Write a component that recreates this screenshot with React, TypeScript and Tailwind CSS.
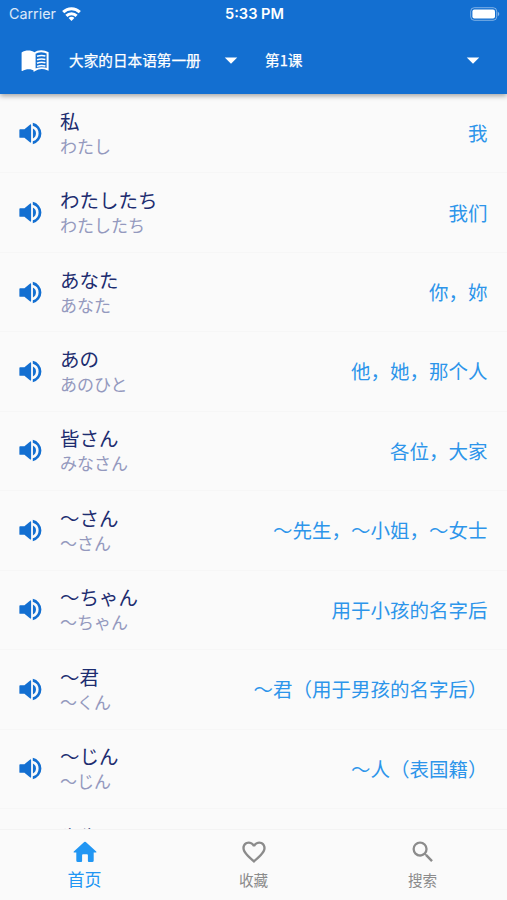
import { MdArrowDropDown, MdFavoriteBorder, MdSearch } from "react-icons/md";

interface Word {
  id: number;
  word: string;
  kana: string;
  meaning: string;
}

interface IconProps {
  className?: string;
}

const words: Word[] = [
  { id: 1, word: "私", kana: "わたし", meaning: "我" },
  { id: 2, word: "わたしたち", kana: "わたしたち", meaning: "我们" },
  { id: 3, word: "あなた", kana: "あなた", meaning: "你，妳" },
  { id: 4, word: "あの", kana: "あのひと", meaning: "他，她，那个人" },
  { id: 5, word: "皆さん", kana: "みなさん", meaning: "各位，大家" },
  { id: 6, word: "～さん", kana: "～さん", meaning: "～先生，～小姐，～女士" },
  { id: 7, word: "～ちゃん", kana: "～ちゃん", meaning: "用于小孩的名字后" },
  { id: 8, word: "～君", kana: "～くん", meaning: "～君（用于男孩的名字后）" },
  { id: 9, word: "～じん", kana: "～じん", meaning: "～人（表国籍）" },
  { id: 10, word: "先生", kana: "せんせい", meaning: "老师" },
];

const tabs = [
  { label: "首页", icon: HomeIcon, active: true },
  { label: "收藏", icon: MdFavoriteBorder, active: false },
  { label: "搜索", icon: MdSearch, active: false },
];

function HomeIcon({ className }: IconProps) {
  return (
    <svg className={className} viewBox="0 0 28 28" fill="currentColor">
      <path d="M13.2 4.1q.8-.7 1.6 0l10.4 9.3q.9 1-.4 1H22.7v8.1q0 1.5-1.5 1.5h-3.3q-1 0-1-1v-5.8q0-.9-.9-.9h-4q-.9 0-.9.9V23q0 1-1 1H6.8q-1.5 0-1.5-1.5v-8.1H3.2q-1.3 0-.4-1z" />
    </svg>
  );
}

function BookIcon() {
  return (
    <svg className="mt-[2px]" width="30" height="30" viewBox="0 0 30 30" fill="none" stroke="white">
      <path
        d="M1.6 6.4C5.6 4 11 4 14.6 6.4V25C11.2 22.6 6 22.8 2.4 25q-.8.4-.8-.5z"
        fill="white"
        stroke="none"
      />
      <path d="M14.6 7.2C18.2 4.6 24 4.6 27.6 6.9v16.4C24 21.8 18.4 21.8 14.6 24.2z" strokeWidth="2" />
      <path
        d="M17 10.3c2.6-1 5.7-1.1 8.4-.4M17 13.8c2.6-1 5.7-1.1 8.4-.4M17 17.2c2.6-1 5.7-1.1 8.4-.4M17 20.4c2.6-1 5.7-1.1 8.4-.4"
        strokeWidth="1.5"
      />
    </svg>
  );
}

function VolumeIcon() {
  return (
    <svg className="size-[29px] text-[#136fd1]" viewBox="0 0 24 24" fill="currentColor">
      <path d="M3.4 8.4Q2.8 8.4 2.8 9v6q0 .6.6.6H7l4.5 3.7q1 .7 1-.4V5.1q0-1.1-1-.4L7 8.4z" />
      <path d="M14 7.9a4.6 4.6 0 0 1 0 8.2z" />
      <path d="M13.9 3.2v2.3a6.8 6.8 0 0 1 0 13v2.3a9 9 0 0 0 0-17.6z" />
    </svg>
  );
}

function StatusBar() {
  return (
    <div className="grid h-[27px] grid-cols-3 items-center pl-[9px] pr-[7px] font-['Inter','Liberation_Sans',sans-serif] text-white">
      <div className="flex items-center gap-[6px] text-[14.3px] text-white/85">
        <span>Carrier</span>
        <svg width="19" height="14" viewBox="0 0 19 14" fill="none" stroke="white" strokeWidth="3">
          <path d="M1.2 5.1a11.8 11.8 0 0 1 16.6 0" />
          <path d="M4.4 8.9a7.2 7.2 0 0 1 10.2 0" />
          <path d="M9.5 13.9 6.6 11a4 4 0 0 1 5.8 0z" fill="white" stroke="none" />
        </svg>
      </div>
      <span className="pt-[2px] text-center text-[14.6px] font-semibold">5:33 PM</span>
      <svg className="justify-self-end" width="30" height="14" viewBox="0 0 30 14">
        <rect x="0.7" y="0.7" width="26" height="12.6" rx="3.6" fill="none" stroke="white" strokeOpacity="0.45" />
        <rect x="2.4" y="2.4" width="22.6" height="9.2" rx="2" fill="white" />
        <path d="M27.8 4.8c2 .8 2 3.6 0 4.4z" fill="white" fillOpacity="0.5" />
      </svg>
    </div>
  );
}

function Header() {
  return (
    <header className="relative z-10 h-[94px] shrink-0 bg-[#136fd1] shadow-[0_2px_5px_rgba(0,0,0,0.35)]">
      <StatusBar />
      <div className="flex h-[65px] items-center pl-5 text-[14.65px] text-white [-webkit-text-stroke:0.25px_white]">
        <BookIcon />
        <div className="ml-[19px] flex w-[177px] items-center justify-between">
          <span>大家的日本语第一册</span>
          <MdArrowDropDown className="size-[30px]" />
        </div>
        <div className="ml-[19px] flex w-[223px] items-center justify-between">
          <span>第1课</span>
          <MdArrowDropDown className="size-[30px]" />
        </div>
      </div>
    </header>
  );
}

function WordRow({ item }: { item: Word }) {
  return (
    <li className="flex h-[79.45px] shrink-0 items-center border-b border-[#f6f6f6] pl-4 pr-[19.5px] last:pt-[2px]">
      <VolumeIcon />
      <div className="ml-[15px] flex-1 pb-px">
        <p lang="ja" className="text-[19.5px] leading-[26px] text-[#1d2d70]">{item.word}</p>
        <p lang="ja" className="text-[17px] leading-[24px] text-[#9499be]">{item.kana}</p>
      </div>
      <span className="pb-px text-[19.5px] text-[#2d95ea]">{item.meaning}</span>
    </li>
  );
}

export default function App() {
  return (
    <div lang="zh-CN" className="flex h-[900px] w-[507px] flex-col overflow-hidden bg-[#fafafa] font-['Noto_Sans_CJK_SC',sans-serif]">
      <Header />
      <ul className="flex min-h-0 flex-1 flex-col overflow-hidden">
        {words.map((item) => (
          <WordRow key={item.id} item={item} />
        ))}
      </ul>
      <nav className="grid h-[71px] shrink-0 grid-cols-3 border-t border-[#f3f3f3]">
        {tabs.map(({ label, icon: Icon, active }) => (
          <div
            key={label}
            className={`flex flex-col items-center pt-[8px] ${active ? "text-[17px] text-[#2196f3]" : "text-[14.6px] text-[#8b8b8b]"}`}
          >
            <Icon className="size-7" />
            <span className={active ? "leading-[25px]" : "leading-[27px]"}>{label}</span>
          </div>
        ))}
      </nav>
    </div>
  );
}
